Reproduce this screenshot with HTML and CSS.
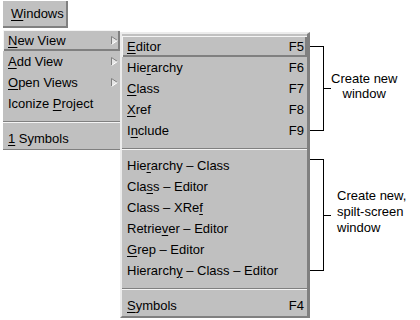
FILE: index.html
```html
<!DOCTYPE html>
<html lang="en">
<head>
    <meta charset="UTF-8">
    <title>Windows Menu</title>
    <link rel="stylesheet" href="styles.css">
</head>
<body>
    <div class="screen">
        <button class="menubtn"><u>W</u>indows</button>

        <div class="menus">
            <!-- Windows menu -->
            <ul class="menu main">
                <li class="item active"><span><u>N</u>ew View</span><svg class="arrow" width="7" height="9" viewBox="0 0 7 9"><polygon points="0.5,0.5 6.5,4.5 0.5,8.5" fill="#e4e4e4"/><path d="M0.5 8.5 L0.5 0.5 L6.5 4.5" fill="none" stroke="#808080"/><path d="M6.5 4.5 L0.5 8.5" fill="none" stroke="#ffffff"/></svg></li>
                <li class="item"><span><u>A</u>dd View</span><svg class="arrow" width="7" height="9" viewBox="0 0 7 9"><polygon points="0.5,0.5 6.5,4.5 0.5,8.5" fill="#e4e4e4"/><path d="M0.5 8.5 L0.5 0.5 L6.5 4.5" fill="none" stroke="#808080"/><path d="M6.5 4.5 L0.5 8.5" fill="none" stroke="#ffffff"/></svg></li>
                <li class="item"><span><u>O</u>pen Views</span><svg class="arrow" width="7" height="9" viewBox="0 0 7 9"><polygon points="0.5,0.5 6.5,4.5 0.5,8.5" fill="#e4e4e4"/><path d="M0.5 8.5 L0.5 0.5 L6.5 4.5" fill="none" stroke="#808080"/><path d="M6.5 4.5 L0.5 8.5" fill="none" stroke="#ffffff"/></svg></li>
                <li class="item"><span>Iconize <u>P</u>roject</span></li>
                <li class="sep"></li>
                <li class="item"><span><u>1</u> Symbols</span></li>
            </ul>

            <!-- New View submenu -->
            <ul class="menu sub">
                <li class="item active"><span><u>E</u>ditor</span><span>F5</span></li>
                <li class="item"><span>Hie<u>r</u>archy</span><span>F6</span></li>
                <li class="item"><span><u>C</u>lass</span><span>F7</span></li>
                <li class="item"><span><u>X</u>ref</span><span>F8</span></li>
                <li class="item"><span>I<u>n</u>clude</span><span>F9</span></li>
                <li class="sep"></li>
                <li class="item"><span>Hie<u>r</u>archy &ndash; Class</span></li>
                <li class="item"><span>Cla<u>s</u>s &ndash; Editor</span></li>
                <li class="item"><span>Class &ndash; XRe<u>f</u></span></li>
                <li class="item"><span>Retrie<u>v</u>er &ndash; Editor</span></li>
                <li class="item"><span><u>G</u>rep &ndash; Editor</span></li>
                <li class="item"><span>Hierarch<u>y</u> &ndash; Class &ndash; Editor</span></li>
                <li class="sep"></li>
                <li class="item"><span><u>S</u>ymbols</span><span>F4</span></li>
            </ul>

            <!-- Callouts -->
            <div class="notes">
                <div class="note note-new">
                    <div class="bracket"></div>
                    <div class="tick"></div>
                    <div class="note-text">Create new<br>window</div>
                </div>
                <div class="note note-split">
                    <div class="bracket"></div>
                    <div class="tick"></div>
                    <div class="note-text">Create new,<br>spilt-screen<br>window</div>
                </div>
            </div>
        </div>
    </div>
</body>
</html>
```

FILE: styles.css
```css
/* Basic reset */
* {
    box-sizing: border-box;
    margin: 0;
    padding: 0;
}
body {
    font-family: 'Liberation Sans', Arial, Helvetica, sans-serif;
    font-size: 13px;
    color: #000;
    background-color: #fff;
}
u {
    text-underline-offset: 2px;
}
.screen {
    padding: 1px 0 0 3px;
}
/* Menu bar button */
.menubtn {
    display: block;
    width: 65px;
    height: 27px;
    padding-left: 8px;
    text-align: left;
    font: inherit;
    color: #000;
    background-color: #c0c0c0;
    border: none;
    border-right: 2px solid #808080;
    border-bottom: 2px solid #808080;
}
.menus {
    display: flex;
    align-items: flex-start;
    margin-top: 2px;
}
/* Menus */
.menu {
    list-style: none;
    background-color: #c0c0c0;
}
.main {
    width: 117px;
    border-bottom: 1px solid #808080;
}
.sub {
    width: 190px;
    margin-top: 2px;
    padding-top: 2px;
    border-top: 2px solid #ececec;
    border-left: 2px solid #ececec;
    border-right: 3px solid #808080;
    border-bottom: 2px solid #808080;
}
.item {
    display: flex;
    align-items: center;
    justify-content: space-between;
    height: 21px;
    padding: 0 2px 0 5px;
    white-space: nowrap;
}
.sub .item {
    padding: 0 3px 0 5px;
}
.item.active {
    box-shadow: inset 1px 1px 0 #f4f4f4, inset -2px -2px 0 #808080;
}
.sep {
    height: 2px;
    margin: 7px 0 5px;
    border-top: 1px solid #808080;
    border-bottom: 1px solid #f4f4f4;
}
/* Callouts */
.notes {
    display: flex;
    flex-direction: column;
}
.note {
    display: flex;
    align-items: center;
}
.bracket {
    width: 14px;
    border: 1px solid #000;
    border-left: none;
}
.tick {
    width: 7px;
    height: 1px;
    background-color: #000;
}
.note-new {
    margin-top: 16px;
}
.note-new .bracket {
    height: 85px;
}
.note-new .note-text {
    text-align: center;
    line-height: 15px;
    margin-top: -5px;
}
.note-split {
    margin-top: 28px;
}
.note-split .bracket {
    height: 112px;
}
.note-split .note-text {
    margin-left: 6px;
    line-height: 16px;
    margin-top: -6px;
}
```
